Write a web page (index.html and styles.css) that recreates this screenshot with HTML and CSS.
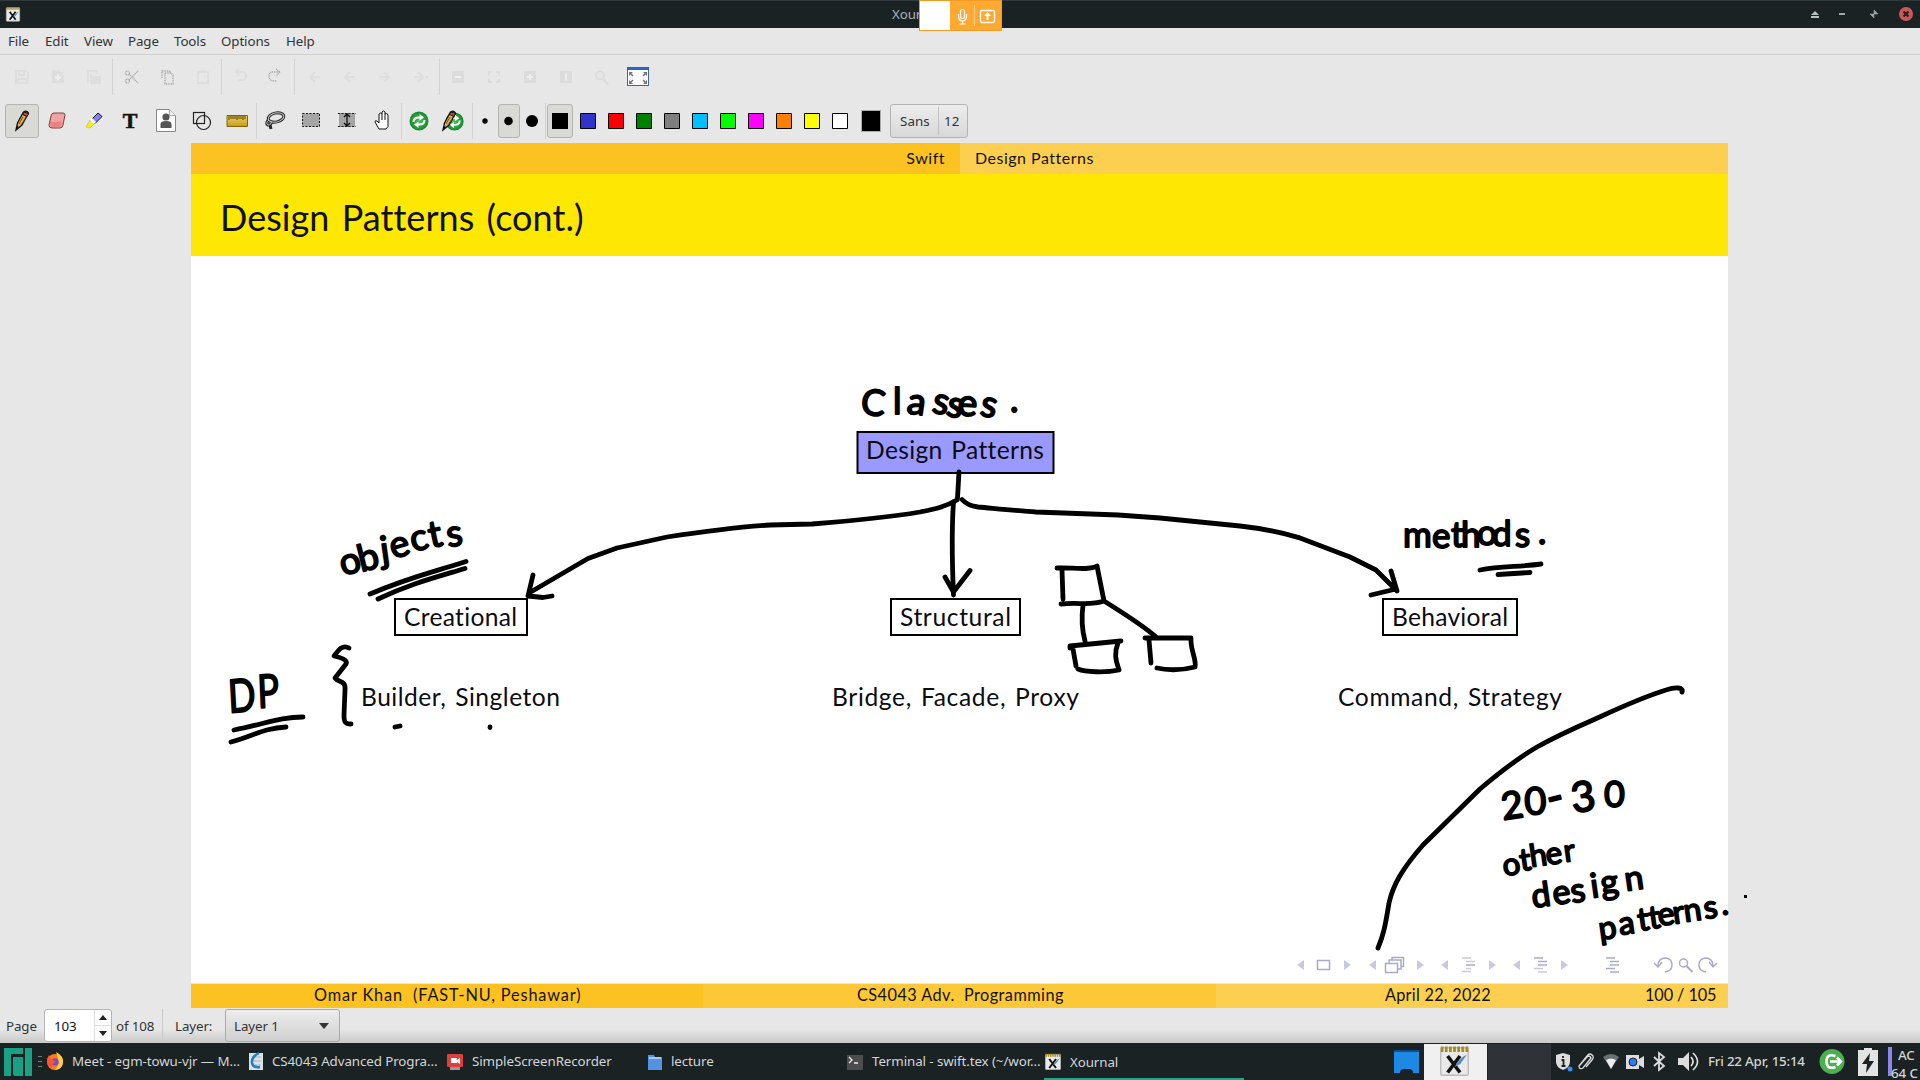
FILE: index.html
```html
<!DOCTYPE html>
<html lang="en">
<head>
<meta charset="utf-8">
<title>Xournal</title>
<link rel="stylesheet" href="styles.css">
</head>
<body>
<svg class="defs" width="0" height="0" aria-hidden="true">
  <defs>
    <linearGradient id="gold" x1="0" y1="0" x2="0" y2="1"><stop offset="0" stop-color="#f3d562"/><stop offset="1" stop-color="#c59a18"/></linearGradient>
    <radialGradient id="green"><stop offset="0" stop-color="#4fc25c"/><stop offset="1" stop-color="#168a2c"/></radialGradient>
    <symbol id="pencil" viewBox="0 0 24 24"><path d="M6 21 7.500 14 13.500 3q3-2 5 1L12 16z" fill="#e0b060" stroke="#111" stroke-width="1.300"/><path d="m14 3 4.500 1.500-1.500 3-4.500-2z" fill="#c5493c" stroke="#111"/><path d="m13 8-4 7m6-5-4 6" stroke="#7a4a18" fill="none"/><path d="m6 21 1-4 2 1z" fill="#111"/></symbol>
    <symbol id="xour" viewBox="0 0 24 24"><rect x="2" y="2" width="20" height="20" rx="1" fill="#e9e9e7" stroke="#bbb"/><path d="M2 3h20" stroke="#a58c22" stroke-width="4" stroke-dasharray="2 1"/><path d="m7 8 9 12M16 8 7 20" stroke="#111" stroke-width="2.600"/><path d="M21 7q-5 2-9 9l4-2z" fill="#5489c6"/></symbol>
    <symbol id="recycle" viewBox="0 0 24 24"><circle cx="12" cy="12" r="9.500" fill="url(#green)"/><path d="M6.500 13q0-5 6.500-4.500m4.500 2.500q0 5-6.500 4.500" fill="none" stroke="#fff" stroke-width="2"/><path d="m12.500 5 4.500 3.500-4.500 3zM11.500 19 7 15.500l4.500-3z" fill="#fff"/></symbol>
  </defs>
</svg>

<header class="titlebar">
  <svg class="appicon" width="16" height="17"><use href="#xour"/></svg>
  <span class="wintitle">Xournal</span>
  <div class="winbtns">
    <svg width="106" height="28">
      <path d="m7 11 4 4H3zM3 16h8v2H3z" fill="#b4c3c0"/>
      <path d="M31 13h6v2h-6z" fill="#9aa5a4"/>
      <path d="M66 10v4h4zM62 14h4v4z" fill="#9aa5a4" stroke="#9aa5a4" stroke-width=".6"/>
      <circle cx="98" cy="14" r="7" fill="#c9585d"/><path d="m95.500 11.500 5 5m0-5-5 5" stroke="#281a1c" stroke-width="2"/>
    </svg>
  </div>
</header>

<div class="share">
  <i class="preview"></i>
  <svg width="24" height="29" fill="none" stroke="#fff" stroke-width="1.200"><rect x="10.500" y="8.500" width="4" height="9" rx="2"/><path d="M8.500 13v2q0 5 4 5t4-5v-2M12.500 20v3m-3 0h6"/></svg>
  <svg class="present" width="26" height="29"><rect x="5.500" y="9.500" width="14" height="12" rx="1.500" fill="none" stroke="#fff" stroke-width="1.300"/><path d="m12.500 11 3.500 4h-2.500v4h-2v-4H9z" fill="#fff"/></svg>
</div>

<nav class="menubar">
  <span class="m1">File</span><span class="m2">Edit</span><span class="m3">View</span><span class="m4">Page</span><span class="m5">Tools</span><span class="m6">Options</span><span class="m7">Help</span>
</nav>

<div class="toolbar files">
  <svg width="660" height="43">
    <g stroke="#d2d2d2"><path d="M112.500 4v36M221.500 4v36M294.500 4v36M439.500 4v36"/></g>
    <g fill="none" stroke="#dedede" stroke-width="1.800">
      <path d="M16 16h10l2 2v10H16zM19 16v4h5v-4M18 28v-4h8v4"/>
      <path d="M52 15h7l5 5v8H52z" fill="#dedede" stroke="none"/>
      <path d="M88 28V16h9v3M91 19v9h3"/><path d="M93 22h7v6h-7z" fill="#dedede"/>
      <path d="M198 17h10v11h-10zM201 16h4"/>
      <path d="M236 17h6q4 0 4 4t-4 4h-4M239 14l-3 3 3 3"/>
      <path d="M310 22h10M315 17l-5 5 5 5M306 22h1M345 22h10M350 17l-5 5 5 5M379 22h10M384 17l5 5-5 5M414 22h9M418 17l5 5-5 5M426 22h2"/>
    </g>
    <g fill="none" stroke="#a9a9a9" stroke-width="1.400" stroke-dasharray="1 .7">
      <circle cx="127.500" cy="18" r="2"/><circle cx="127.500" cy="26" r="2"/><path d="m129 19 9 9m-9-3 9-9"/>
      <path d="M162 23v-7h8v2M165 18h6l2 2v9h-8z"/>
      <path d="M280 17h-7q-4 0-4 4t4 5h4m-1-12 4 3-4 4"/>
    </g>
    <g fill="#dcdcdc"><path d="M452 16h12v12h-12zM524 16h12v12h-12zM560 16h12v12h-12z"/></g>
    <path d="M55 22.500h6m-3-3v6M455 22h6M527 22h6m-3-3v6M566 18.500v7" stroke="#eee" stroke-width="2"/>
    <path d="M489 20v-3h3m4 0h3v3m0 4v3h-3m-4 0h-3v-3" fill="none" stroke="#dcdcdc" stroke-width="2"/>
    <circle cx="600" cy="20.500" r="4" fill="none" stroke="#dcdcdc" stroke-width="2"/><path d="m603 24 5 5" stroke="#dcdcdc" stroke-width="2.500"/>
    <rect x="627.500" y="12.500" width="21" height="18" fill="#fcfcff" stroke="#3d67a8"/><path d="M627 12h22v3h-22z" fill="#2f62c4"/>
    <path d="M629 17h4l-4 4zM647 17h-4l4 4zM629 29h4l-4-4zM647 29h-4l4-4z" fill="#777"/>
    <path d="m630 18 3 3m13-3-3 3m-13 7 3-3m13 3-3-3" stroke="#777" stroke-width="1.500"/>
  </svg>
</div>

<div class="toolbar pens">
  <svg width="888" height="45">
    <g stroke="#d2d2d2"><path d="M256.500 5v36M401.500 5v36M472.500 5v36M545.500 5v36"/></g>
    <g fill="#d9d9d6" stroke="#b4b4b0"><rect x="5.500" y="6.500" width="33" height="33" rx="2.500"/><rect x="498.500" y="6.500" width="21" height="33" rx="2.500"/><rect x="547.500" y="6.500" width="25" height="33" rx="2.500"/></g>
    <use href="#pencil" x="10" y="11" width="24" height="24"/>
    <path d="M54 15h9q2 0 2 2l-2 10q-.5 3-3 3h-8q-3 0-3-3l2-9q.5-3 3-3z" fill="#f2a29f" stroke="#7b3f3f"/><path d="m50 24 1 5 9 .5 2-6z" fill="#e98281"/>
    <path d="m98 15 4 3.500-7 7-4-3.500z" fill="#8482f2" stroke="#111"/><path d="m90 22 4 4-4 4-4-1z" fill="#fff200" stroke="#aaa" stroke-width=".6"/><path d="m92 20 4 4-2 2-4-4z" fill="#fff"/>
    <text x="122.800" y="30" class="ticon">T</text>
    <path d="M156.500 11.500h13l6 6v16h-19z" fill="#fff" stroke="#888"/><path d="M169.500 11.500v6h6" fill="#eee" stroke="#aaa"/><circle cx="166" cy="19" r="3.600" fill="#555"/><path d="M160.500 30v-4q0-3 5.500-3t5.500 3v4z" fill="#555"/>
    <g fill="none" stroke="#222" stroke-width="1.200"><rect x="193.500" y="14.500" width="11" height="11"/><circle cx="203.500" cy="24.500" r="7"/></g>
    <path d="M227 17.500h20.500v11H227z" fill="url(#gold)" stroke="#80640c"/><path d="M229 18v4m2-4v3m2-3v3m2-3v3m2-3v4m2-4v3m2-3v3m2-3v4m2-4v3" stroke="#4b3b05"/>
    <g fill="none" stroke="#222" stroke-width="3"><ellipse cx="276" cy="19.500" rx="8" ry="4.500" transform="rotate(-12 276 19.500)"/><path d="M269 22q-4 3-1 5 4 0 3-4M270 27l1 4"/></g><g fill="none" stroke="#ccc"><ellipse cx="276" cy="19.500" rx="8" ry="4.500" transform="rotate(-12 276 19.500)"/><path d="M269 22q-4 3-1 5 4 0 3-4"/></g>
    <path d="M302.500 15.500h17v13h-17z" fill="#a5a5a5" stroke="#111" stroke-dasharray="2 1.500"/>
    <path d="M339 15h16v14h-16z" fill="#a5a5a5"/><path d="M338 15.500h18m-18 13h18" stroke="#111" stroke-dasharray="2 1.500"/><path d="M347 16v12m-3-9 3-3 3 3m-6 6 3 3 3-3" fill="none" stroke="#111" stroke-width="1.300"/>
    <path d="m379 31-4-7q0-2 2-1l2 2v-9q1.500-2 3 0v-2q1.500-2 3 0v2q2-1.500 3 1v8q1 4-2 6z" fill="#fff" stroke="#111"/><path d="M382 16v6m3-6v6" stroke="#111"/>
    <use href="#recycle" x="407" y="11" width="24" height="24"/>
    <use href="#recycle" x="443" y="12" width="23" height="23"/><use href="#pencil" x="437" y="11" width="24" height="24"/>
    <circle cx="485" cy="23" r="2.700"/><circle cx="508.500" cy="23" r="4.300"/><circle cx="532" cy="23" r="6"/>
    <path d="M552 15h16v16h-16z"/>
    <g stroke="#000"><path d="M580.500 15.500h15v15h-15z" fill="#3232cc"/><path d="M608.500 15.500h15v15h-15z" fill="#f00"/><path d="M636.500 15.500h15v15h-15z" fill="#008000"/><path d="M664.500 15.500h15v15h-15z" fill="#808080"/><path d="M692.500 15.500h15v15h-15z" fill="#00c0ff"/><path d="M720.500 15.500h15v15h-15z" fill="#0f0"/><path d="M748.500 15.500h15v15h-15z" fill="#f0f"/><path d="M776.500 15.500h15v15h-15z" fill="#ff8000"/><path d="M804.500 15.500h15v15h-15z" fill="#ff0"/><path d="M832.500 15.500h15v15h-15z" fill="#fff"/></g>
    <path d="M861.500 12.500h19v21h-19z" stroke="#aaa"/>
  </svg>
  <div class="fontbtn"><span>Sans</span><span>12</span></div>
</div>

<main class="slide">
  <div class="headline"><div><span>Swift</span></div><div><span>Design Patterns</span></div></div>
  <h1>Design Patterns (cont.)</h1>
  <div class="canvas">
    <svg viewBox="191 256 1560 727" width="1560" height="727">
      <g fill="none" stroke="#000" stroke-width="2">
        <rect x="857.500" y="432" width="196" height="41" fill="#9999ff"/>
        <rect x="395" y="599" width="132" height="36"/><rect x="891" y="599" width="129" height="36"/><rect x="1383" y="599" width="134" height="36"/>
      </g>
      <g class="node">
        <text x="866" y="459" textLength="178">Design Patterns</text>
        <text x="404" y="626" textLength="113">Creational</text>
        <text x="900" y="626" textLength="111">Structural</text>
        <text x="1392" y="626" textLength="116">Behavioral</text>
        <text x="361" y="706" textLength="199">Builder, Singleton</text>
        <text x="832" y="706" textLength="247">Bridge, Facade, Proxy</text>
        <text x="1338" y="706" textLength="224">Command, Strategy</text>
      </g>
      <g class="ink">
        <path d="M957 500C945 507 935 509 920 512 890 517 850 521 812 524L770 525C740 527 700 532 667 537L617 548 588 558.500 529 593M533 575 528 596 543 597.500 552 596"/>
        <path d="M959 472 957.500 498M953.500 502C951.500 530 952 560 953.500 595M945 577 953.500 592 970 570.500"/>
        <path d="M962 499.500C966 504 970 506 978 507 1000 509 1020 511 1036 512L1118 515 1160 518 1240 526C1275 530 1290 535 1300 538L1350 557 1376 570 1396 590M1391 571 1397 591M1371 595 1396 589"/>
        <path d="M1057 568C1070 567 1088 571 1097 566L1104 601M1062 570 1063 599M1061 604C1080 602 1090 606 1104 601M1083 605C1081 620 1082 630 1085 641M1104 601C1120 611 1145 627 1156 637"/>
        <path d="M1070 648 1070 646 1121 641M1073 649 1076 666M1118 643C1113 655 1117 663 1119 670 1105 673 1085 672 1078 669"/>
        <path d="M1145 638H1191C1190 650 1197 660 1195 667 1180 671 1165 670 1157 668M1149 640 1151 663"/>
        <path d="M370 594C410 577 430 573 466 561.500M378 599C410 584 430 579 465 568.500"/>
        <path d="M1480 570C1500 566 1520 567 1541 564M1498 574.500 1530 572.500"/>
        <path d="M234 730C265 724 280 717 303 717M231 742C255 735 265 728 286 727"/>
        <path d="M349 648C342 644 338 651 334 656 342 658 348 660 346 664L335 678C339 683 346 680 345 690L344 715C344 722 345 724 351 724M395 727 400 726M490 727V727.500"/>
        <path d="M1682 692C1684 687 1675 687 1666 690 1640 698 1615 710 1593 720 1570 730 1555 737 1537 747 1515 760 1500 772 1480 789L1423 845C1402 869 1393 885 1389 903 1385 928 1383 936 1378 948"/>
      </g>
      <g class="hand">
        <text x="860 893" y="414 414" rotate="6 0" font-size="36">Cl<tspan font-size="37" x="906 931 945 957 979" y="413 412 415 415 415" rotate="8 12 14 4 12">asses</tspan><tspan x="1010" y="412">.</tspan></text>
        <text font-size="37" x="343 361 382 393 413 431 448" y="576 572 563 559 552 548 547" rotate="-16 -14 -8 -16 -14 -12 -8">objects</text>
        <text font-size="35" x="1403 1432 1451 1461 1477 1492 1515 1538" y="547 547.500 547 547 545 546 547 544">methods.</text>
        <text font-size="46" x="229 258" y="713 708" rotate="-4 -3" textLength="49" lengthAdjust="spacingAndGlyphs">DP</text>
        <text x="1503 1525 1550" y="820 815 814" rotate="-8 -3 -14" font-size="38">20<tspan font-size="46">-</tspan><tspan font-size="42" x="1573" y="813" rotate="-8">3</tspan><tspan font-size="36" x="1604" y="807" rotate="0">0</tspan></text>
        <text font-size="31" x="1504 1521 1531 1547 1565" y="876 871 867 865 862" rotate="-8">other</text>
        <text font-size="34" x="1533 1554 1572 1592 1602 1626" y="908 905 903 898 895 891" rotate="-8">design</text>
        <text font-size="32" x="1600 1620 1639 1650 1659 1674 1685 1705 1722" y="940 935 931 929 926 924 922 919 915" rotate="-8">patterns.</text>
      </g>
      <rect x="1744" y="895" width="3" height="3"/>
      <g fill="#c9c9de"><path d="m1297 965 7-5v10zM1351 965l-7-5v10zM1369 965l7-5v10zM1424 965l-7-5v10zM1441 965l7-5v10zM1496 965l-7-5v10zM1513 965l7-5v10zM1568 965l-7-5v10z"/></g>
      <g fill="none" stroke="#aaaac8" stroke-width="1.500">
        <path d="M1317.500 960.500h12v9h-12zM1385.500 963.500h12v9h-12zM1389 963v-3h12v9h-3M1392 960v-2.500h11.500v9h-3"/>
        <path d="m1654 963 4 4 4-5m-4 4q0-8 8-8 6 1 6 7t-7 7M1717 963l-4 4-4-5m4 4q0-8-8-8-6 1-6 7t7 7"/>
        <circle cx="1683.500" cy="963" r="4"/><path d="m1686.500 966 6 6" stroke-width="2"/>
        <path d="M1462 958h9m-5 3.500h9m-9 7h5m-9 3h9M1534 968.500h9m-5 3.500h9" stroke="#c9c9de"/>
        <path d="M1466 965h9M1534 958h9m-5 3.500h9m-9 3.500h9M1606 958h9m-5 3.500h9m-9 3.500h9m-13 3.500h9m-5 3.500h9"/>
      </g>
    </svg>
  </div>
  <div class="footline"><div><span class="f1">Omar Khan&nbsp; (FAST-NU, Peshawar)</span></div><div><span class="f2">CS4043 Adv.&nbsp; Programming</span></div><div><span class="f3">April 22, 2022</span><span class="f4">100 / 105</span></div></div>
</main>

<div class="status">
  <span class="pg">Page</span>
  <div class="spin"><span>103</span><svg width="16" height="31"><path d="M0 15.500h16" stroke="#ddd"/><path d="m8 5 4 5H4zM8 26l4-5H4z" fill="#222"/></svg></div>
  <span class="of">of 108</span>
  <span class="layer">Layer:</span>
  <div class="combo"><span>Layer 1</span><svg width="10" height="6"><path d="M0 0h10L5 6z" fill="#333"/></svg></div>
</div>

<footer class="taskbar">
  <svg class="logo" width="43" height="37"><path d="M4 5h19v6H11v22H4zM13 14h10v19h-8q-2 0-2-2zM25 5h7v28h-7z" fill="#1aa084"/><path d="M38 13.500h4m-4 5h4m-4 5h4" stroke="#748082"/></svg>
  <div class="task t1"><svg width="18" height="20"><circle cx="9" cy="11" r="8" fill="#ff7a20"/><path d="M10 1q8 4 7 11-1 6-8 7 6-6 1-18" fill="#ffd03a"/><circle cx="9" cy="11" r="3.800" fill="#8148c8"/><path d="M1 8q0 7 5 9-1-5 4-6L5 8 3 4z" fill="#ff5328"/></svg><span>Meet - egm-towu-vjr — M...</span></div>
  <div class="task t2"><svg width="16" height="20"><path d="M1 2h14v17H1z" fill="#dce3e8"/><path d="M4 6h9m-9 4h9m-9 4h9" stroke="#a8b4bf"/><path d="M11 2q-8 4-7 10 1 5 8 4" fill="none" stroke="#237fc0" stroke-width="2.500"/></svg><span>CS4043 Advanced Progra...</span></div>
  <div class="task t3"><svg width="18" height="20"><rect x="1" y="3" width="16" height="13" rx="1" fill="#dd403c"/><path d="M4 16h10v3H4z" fill="#999"/><path d="M5 7h6v2l3-2v6l-3-2v1H5z" fill="#fff"/></svg><span>SimpleScreenRecorder</span></div>
  <div class="task t4"><svg width="16" height="20"><path d="M1 4h6l1 2h7v13H1z" fill="#5294e2"/><path d="M2 7h12" stroke="#fff"/></svg><span>lecture</span></div>
  <div class="task t5"><svg width="18" height="20"><path d="M1 4h16v15H1z" fill="#4d4d4d"/><path d="m3 6 3 3-3 3m5 0h4" fill="none" stroke="#eee" stroke-width="1.300"/></svg><span>Terminal - swift.tex (~/wor...</span></div>
  <div class="task t6"><svg width="18" height="20"><use href="#xour"/></svg><span>Xournal</span></div>
  <div class="tray">
    <svg width="320" height="37">
      <path d="M1 9h25v21h-6q0-4-4-4h-5q-4 0-4 4H1z" fill="#1e88e5"/><path d="M1 7h25v2H1z" fill="#0e528d"/>
      <path d="M31 1h63v36H31z" fill="#f0f0f0"/><use href="#xour" x="45" y="2" width="33" height="33"/><path d="M95 1h63v36H95z" fill="#2f3337"/>
      <path d="m170 10 7 2v7q0 5-7 8-7-3-7-8v-7z" fill="#ddd"/><path d="M168.500 17h2v6m-2 0h4M170 13v2" stroke="#1b2224" stroke-width="1.800" fill="none"/><circle cx="177" cy="26" r="2.500" fill="#3d8cf0"/>
      <path d="m189 22 7-8q3-2 4 1l-8 10q-4 2-4-2l8-10q3-4 6 0 1 2-1 4l-6 7" fill="none" stroke="#ddd" stroke-width="1.300" transform="translate(-2 0)"/>
      <path d="M210 14q8-6 16 0l-8 12z" fill="#687072"/><path d="M213 17q5-3 10 0l-5 9z" fill="#eee"/>
      <path d="M233 12h13v4l5-3v12l-5-3v4h-13z" fill="#ddd"/><circle cx="240" cy="19" r="4" fill="#2d7bf0" stroke="#1b2224"/>
      <path d="m261 14 10 9-5 4V10l5 4-10 9" fill="none" stroke="#ddd" stroke-width="1.800"/>
      <path d="M285 15h5l6-6v19l-6-6h-5z" fill="#ddd"/><path d="M298 14q4 4.500 0 9m2-13q9 8.500 0 17" fill="none" stroke="#ddd" stroke-width="1.700"/>
    </svg>
    <span class="clock">Fri 22 Apr, 15:14</span>
    <svg class="pow" width="76" height="37"><circle cx="14" cy="18.500" r="12.500" fill="#4caf50"/><path d="M17.500 13q-9-3-9 5.500t9 5.500M12 18.500h11m-4-4 4 4-4 4" fill="none" stroke="#fff" stroke-width="2.500"/><path d="M40 7h6V5h8v2h6v26H40z" fill="#e2e4e4"/><path d="m52 10-8 11h5l-1 9 8-12h-5z" fill="#1b2224"/><path d="M70 4h4v29h-4z" fill="#8d86ee"/></svg>
    <div class="ac"><span>AC</span><span>64 C</span></div>
  </div>
</footer>
</body>
</html>
```
FILE: styles.css
```css
* { box-sizing: border-box; }
body { margin: 0; width: 1920px; height: 1080px; overflow: hidden; background: #e7e7e7; display: flex; flex-direction: column; font: 13.33px/20px "Noto Sans", sans-serif; color: #333; letter-spacing: -.1px; }
svg { display: block; flex: none; }
span { white-space: nowrap; }
.defs { position: absolute; }

.titlebar { flex: none; height: 28px; background: #1b2224; border-top: 1px solid #30393c; display: flex; align-items: center; padding: 0 0 1px 5px; color: #a9b2b3; }
.wintitle { margin-left: 871px; }
.winbtns { margin-left: auto; padding-right: 6px; height: 28px; }
.share { position: absolute; left: 919px; top: 0; width: 83px; height: 31px; border: 1px solid #f09a28; background: #ffa931; display: flex; }
.preview { width: 30px; background: #fff; }
.present { border-left: 1px solid #ffcd86; margin: 4px 0; height: 21px; overflow: visible; }
.present > * { transform: translateY(-4px); }

.menubar { flex: none; height: 27px; border-bottom: 1px solid #cfcfcf; display: flex; align-items: center; padding: 0 0 0 8px; }
.m1 { width: 37px; } .m2 { width: 39px; } .m3 { width: 44px; } .m4 { width: 46px; } .m5 { width: 47px; } .m6 { width: 65px; }
.toolbar { flex: none; display: flex; }
.files { height: 43px; }
.pens { height: 45px; }
.ticon { font: bold 22px "Liberation Serif", serif; fill: #151510; stroke: #151510; stroke-width: .6px; }
.fontbtn { margin: 6px 0 0 2px; width: 78px; height: 34px; border: 1px solid #b3b3b3; border-radius: 3px; background: linear-gradient(#ededed, #d8d8d8); display: flex; align-items: center; }
.fontbtn span { padding-left: 9px; letter-spacing: .1px; margin-top: -1px; }
.fontbtn span:first-child { width: 48px; border-right: 1px solid #c2c2c2; line-height: 28px; }
.fontbtn span + span { padding-left: 5px; }

.slide { width: 1537px; height: 865px; margin-left: 191px; flex: none; background: #fff; display: flex; flex-direction: column; font-family: Lato, sans-serif; font-variant-ligatures: none; color: #14120a; }
.headline { height: 31px; display: grid; grid-template-columns: 769px 1fr; font-size: 16px; line-height: 29px; }
.headline div { background: #fcc221; padding-right: 15px; text-align: right; }
.headline div + div { background: #fdcf50; text-align: left; padding-left: 15px; }
.headline span { letter-spacing: .5px; }
h1 { margin: 0; height: 82px; background: #fee803; padding: 0 0 0 29px; font-weight: 400; font-size: 36px; line-height: 86px; letter-spacing: .05px; word-spacing: 3px; color: #101010; }
.canvas { height: 727px; }
.canvas svg { overflow: visible; }
.node { font-size: 24.6px; fill: #0b0b12; letter-spacing: 0; word-spacing: 2px; }
.ink { fill: none; stroke: #000; stroke-width: 4.8px; stroke-linecap: round; stroke-linejoin: round; }
.hand { font-family: Lato, sans-serif; fill: #000; stroke: #000; stroke-width: 1.8px; stroke-linejoin: round; letter-spacing: 0; }
.footline { flex: 1; display: grid; grid-template-columns: 512px 513px 512px; font-size: 16.3px; line-height: 22px; border-top: 1px solid #fde9a8; }
.footline div { background: #fcc221; display: flex; }
.footline div:nth-child(2) { background: #fcc838; }
.footline div:nth-child(3) { background: #fdcf50; }
.f1 { margin-left: 123px; letter-spacing: .87px; } .f2 { margin-left: 154px; letter-spacing: .45px; } .f3 { margin-left: 169px; width: 260px; letter-spacing: .25px; }

.status { flex: none; height: 35px; display: flex; align-items: flex-start; background: linear-gradient(#e7e7e7 60%, #c9c9c9); padding: 1px 0 1px 6px; line-height: 34px; }
.pg { width: 38px; }
.spin { width: 68px; height: 33px; border: 1px solid #b5b5b5; border-radius: 3px; background: #fff; display: flex; line-height: 32px; color: #111; }
.spin span { width: 51px; padding-left: 9px; border-right: 1px solid #ddd; }
.of { width: 51px; padding-left: 4px; border-right: 1px solid #cacaca; }
.layer { width: 62px; padding-left: 12px; }
.combo { width: 115px; height: 33px; border: 1px solid #aaa; border-radius: 3px; background: linear-gradient(#ececec, #d0d0d0); display: flex; align-items: center; justify-content: space-between; padding: 0 10px 0 8px; }

.taskbar { flex: none; height: 37px; background: #1b2224; display: flex; color: #d2d6d6; }
.task { flex: none; display: flex; align-items: center; gap: 8px; height: 37px; padding-bottom: 1px; }
.task span { letter-spacing: -.08px; }
.logo { margin-right: 3px; }
.t1 { width: 202px; } .t2 { width: 198px; } .t3 { width: 201px; } .t4 { width: 199px; } .t5 { width: 199px; }
.t6 { width: 200px; border-bottom: 2px solid #27a68e; padding: 2px 0 0; margin-left: -1px; }
.tray { margin-left: 149px; display: flex; flex: none; }
.clock { width: 110px; margin-left: -5px; line-height: 37px; font-weight: 500; letter-spacing: -.2px; }
.ac { width: 30px; display: flex; flex-direction: column; line-height: 18px; padding-top: 3px; white-space: nowrap; font-weight: 500; }
.ac span:first-child { padding-left: 4px; }
.ac span + span { margin-left: -3px; }
```
